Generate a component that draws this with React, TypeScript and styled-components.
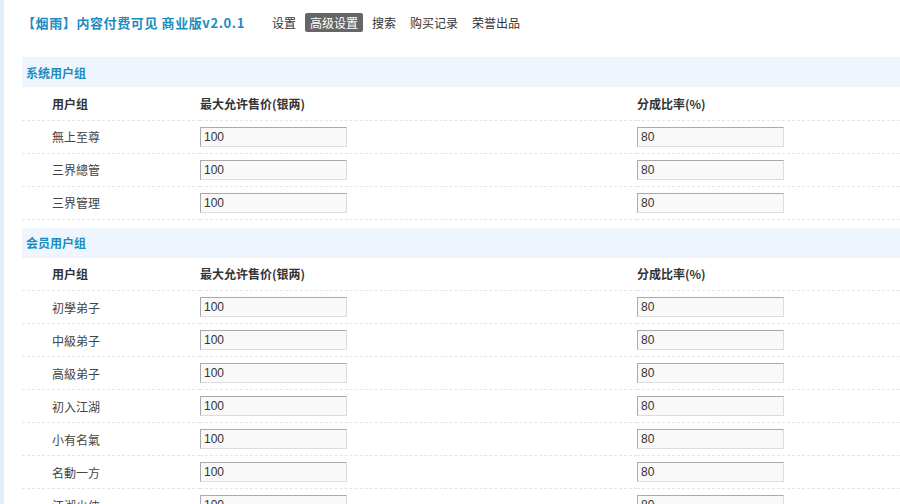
import React from "react";
import styled, { createGlobalStyle } from "styled-components";

const Global = createGlobalStyle`
  body { margin: 0; background: #fff; font-family: "Noto Sans CJK SC", "Liberation Sans", sans-serif; font-size: 12px; color: #333; }
`;

const Page = styled.div`
  border-left: 4px solid #e3eef9;
  padding: 0 0 0 18px;
  min-height: 504px;
  overflow: hidden;
`;

const TopBar = styled.div`
  display: flex;
  align-items: center;
  height: 45px;
`;

const Title = styled.h1`
  margin: 0 22px 0 0;
  font-size: 13px;
  font-weight: bold;
  color: #1b8cbf;
  letter-spacing: 0.6px;
`;

const NavItem = styled.span<{ $active?: boolean }>`
  padding: 1px 5px;
  margin-right: 4px;
  font-size: 12px;
  border-radius: 2px;
  background: ${(p) => (p.$active ? "#666" : "transparent")};
  color: ${(p) => (p.$active ? "#fff" : "#333")};
`;

const Table = styled.table<{ $gap: number }>`
  width: 100%;
  border-collapse: collapse;
  margin-top: ${(p) => p.$gap}px;
`;

const SectionRow = styled.tr`
  background: #eef5fd;
  height: 30px;
  td { color: #1b8cbf; font-weight: bold; padding-left: 4px; }
`;

const Row = styled.tr`
  height: 33px;
  td { border-bottom: 1px dashed #e6e6e6; }
`;

const Cell = styled.td<{ $w?: number; $pad?: number; $head?: boolean }>`
  box-sizing: border-box;
  width: ${(p) => (p.$w ? `${p.$w}px` : "auto")};
  padding: 0 0 0 ${(p) => p.$pad ?? 0}px;
  font-weight: ${(p) => (p.$head ? "bold" : "normal")};
  color: ${(p) => (p.$head ? "#333" : "#444")};
`;

const Input = styled.input`
  width: 147px;
  height: 20px;
  box-sizing: border-box;
  border: 1px solid #aaa;
  border-right-color: #ddd;
  border-bottom-color: #ddd;
  background: #f9f9f9;
  font-family: "Liberation Sans", sans-serif;
  font-size: 12px;
  padding: 0 3px;
  color: #333;
`;

const sections = [
  { name: "系统用户组", groups: ["無上至尊", "三界總管", "三界管理"] },
  { name: "会员用户组", groups: ["初學弟子", "中級弟子", "高級弟子", "初入江湖", "小有名氣", "名動一方", "江湖少侠"] },
];

export default function App() {
  return (
    <Page>
      <Global />
      <TopBar>
        <Title>【烟雨】内容付费可见 商业版v2.0.1</Title>
        <NavItem>设置</NavItem>
        <NavItem $active>高级设置</NavItem>
        <NavItem>搜索</NavItem>
        <NavItem>购买记录</NavItem>
        <NavItem>荣誉出品</NavItem>
      </TopBar>
      {sections.map((s, i) => (
        <Table key={s.name} $gap={i === 0 ? 12 : 8}>
          <tbody>
            <SectionRow>
              <td colSpan={3}>{s.name}</td>
            </SectionRow>
            <Row>
              <Cell $head $w={178} $pad={30}>用户组</Cell>
              <Cell $head $w={437}>最大允许售价(银两)</Cell>
              <Cell $head>分成比率(%)</Cell>
            </Row>
            {s.groups.map((g) => (
              <Row key={g}>
                <Cell $w={178} $pad={30}>{g}</Cell>
                <Cell $w={437}><Input defaultValue="100" /></Cell>
                <Cell><Input defaultValue="80" /></Cell>
              </Row>
            ))}
          </tbody>
        </Table>
      ))}
    </Page>
  );
}
